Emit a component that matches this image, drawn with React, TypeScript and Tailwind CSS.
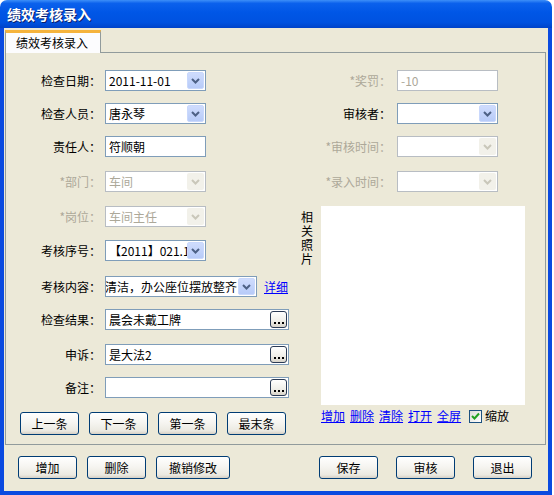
import type React from 'react'

const Chevron = ({ disabled }: { disabled?: boolean }) => (
  <svg width="9" height="6" viewBox="0 0 9 6">
    <polyline points="1,1 4.5,4.5 8,1" fill="none" stroke={disabled ? '#c9c7ba' : '#4d6185'} strokeWidth="2" />
  </svg>
)

const Combo = ({ value, disabled, className = 'w-[101px]', alignEnd }: { value: string; disabled?: boolean; className?: string; alignEnd?: boolean }) => (
  <div
    className={`flex h-[21px] items-center overflow-hidden border bg-white ${className} ${disabled ? 'border-[#b8bdc3]' : 'border-[#7f9db9]'}`}
  >
    <div className={`flex flex-1 overflow-hidden whitespace-nowrap ${alignEnd ? 'justify-end pr-[1px]' : 'pl-[3px]'}`}>
      <span className={`block shrink-0 leading-[19px] ${disabled ? 'text-[#aca899]' : 'text-black'}`}>{value}</span>
    </div>
    <div
      className={`mr-[1px] flex h-[17px] w-[17px] shrink-0 items-center justify-center rounded-[2px] ${
        disabled ? 'bg-[#f2f1ea]' : 'border border-[#c9d8fc] bg-[linear-gradient(180deg,#cfdcfd_0%,#b7cbf8_100%)]'
      }`}
    >
      <Chevron disabled={disabled} />
    </div>
  </div>
)

const TextBox = ({ value, disabled, className = 'w-[101px]' }: { value: string; disabled?: boolean; className?: string }) => (
  <div className={`flex h-[21px] items-center border bg-white pl-[3px] ${className} ${disabled ? 'border-[#b8bdc3] text-[#aca899]' : 'border-[#7f9db9] text-black'}`}>
    {value}
  </div>
)

const EllipsisBox = ({ value, className = 'w-[184px]' }: { value: string; className?: string }) => (
  <div className={`flex h-[21px] items-center border border-[#7f9db9] bg-white ${className}`}>
    <div className="flex-1 overflow-hidden whitespace-nowrap pl-[3px] leading-[19px]">{value}</div>
    <div className="mr-[1px] flex h-[17px] w-[17px] shrink-0 items-end justify-center gap-[2px] rounded-[3px] border border-[#2b3b55] bg-[linear-gradient(180deg,#ffffff_0%,#f0efe9_60%,#d8d4ca_100%)] pb-[3px]">
      <span className="h-[2px] w-[2px] bg-black" />
      <span className="h-[2px] w-[2px] bg-black" />
      <span className="h-[2px] w-[2px] bg-black" />
    </div>
  </div>
)

const Row = ({
  label,
  dim,
  right,
  className,
  children,
}: {
  label: string
  dim?: boolean
  right?: boolean
  className: string
  children: React.ReactNode
}) => (
  <div className={`flex h-[21px] items-center ${className}`}>
    <div className={`text-right leading-[21px] ${right ? 'w-[101px]' : 'w-[95px]'} ${dim ? 'text-[#aca899]' : 'text-black'}`}>{label}</div>
    <div className={right ? 'ml-[6px]' : 'ml-[4px]'}>{children}</div>
  </div>
)

const XpButton = ({ label, className = 'w-[59px]' }: { label: string; className?: string }) => (
  <button
    className={`flex h-[23px] items-center justify-center rounded-[3px] border border-[#003c74] bg-[linear-gradient(180deg,#ffffff_0%,#f6f5f1_45%,#ebe9e1_85%,#d6d0c5_100%)] text-[12px] text-black ${className}`}
  >
    {label}
  </button>
)

const links = ['增加', '删除', '清除', '打开', '全屏']

export default function App() {
  return (
    <div className="h-[495px] w-[554px] bg-white font-['Noto_Sans_CJK_SC',sans-serif] text-[12px]">
      <div className="flex h-[495px] w-[552px] flex-col overflow-hidden rounded-t-[7px]">
        {/* title bar */}
        <div className="flex h-[28px] shrink-0 items-center bg-[linear-gradient(180deg,#3d8ff8_0%,#0b61ec_12%,#0056e6_45%,#0052e0_80%,#0043c9_100%)] pl-[7px]">
          <span className="text-[14px] font-bold text-white [text-shadow:1px_1px_0_#0a1e6a]">绩效考核录入</span>
        </div>

        <div className="flex flex-1 flex-col border-x-[4px] border-b-[4px] border-[#0a4ae0] bg-[#ece9d8]">
          {/* tab header */}
          <div className="mt-[2px] flex pl-[1px]">
            <div className="relative z-10 -mb-px flex h-[23px] w-[96px] items-start border-x border-[#919b9c] border-t-[3px] border-t-[#f5b33c] bg-[#fcfcfe] pl-[10px] pt-[1px] leading-[18px]">
              绩效考核录入
            </div>
          </div>

          {/* tab panel */}
          <div className="ml-[1px] flex h-[393px] w-[541px] border border-[#919b9c]">
            {/* left column */}
            <div className="flex w-[284px] flex-col">
              <Row label="检查日期：" className="mt-[17px]">
                <Combo value="2011-11-01" />
              </Row>
              <Row label="检查人员：" className="mt-[12px]">
                <Combo value="唐永琴" />
              </Row>
              <Row label="责任人：" className="mt-[12px]">
                <TextBox value="符顺朝" />
              </Row>
              <Row label="*部门：" dim className="mt-[14px]">
                <Combo value="车间" disabled />
              </Row>
              <Row label="*岗位：" dim className="mt-[14px]">
                <Combo value="车间主任" disabled />
              </Row>
              <Row label="考核序号：" className="mt-[13px]">
                <Combo value="【2011】021.1" />
              </Row>
              <Row label="考核内容：" className="mt-[15px]">
                <div className="flex items-center">
                  <Combo value="清洁，办公座位摆放整齐" className="w-[152px]" alignEnd />
                  <span className="ml-[7px] cursor-pointer text-[#0000ff] underline">详细</span>
                </div>
              </Row>
              <Row label="检查结果：" className="mt-[12px]">
                <EllipsisBox value="晨会未戴工牌" />
              </Row>
              <Row label="申诉：" className="mt-[14px]">
                <EllipsisBox value="是大法2" />
              </Row>
              <Row label="备注：" className="mt-[12px]">
                <EllipsisBox value="" />
              </Row>
              <div className="mt-[14px] flex gap-[10px] pl-[14px]">
                <XpButton label="上一条" />
                <XpButton label="下一条" />
                <XpButton label="第一条" />
                <XpButton label="最末条" />
              </div>
            </div>

            {/* right column */}
            <div className="flex flex-1 flex-col">
              <Row label="*奖罚：" dim right className="mt-[17px]">
                <TextBox value="-10" disabled />
              </Row>
              <Row label="审核者：" right className="mt-[12px]">
                <Combo value="" />
              </Row>
              <Row label="*审核时间：" dim right className="mt-[12px]">
                <Combo value="" disabled />
              </Row>
              <Row label="*录入时间：" dim right className="mt-[14px]">
                <Combo value="" disabled />
              </Row>

              <div className="mt-[14px] flex">
                <div className="w-[31px] pl-[11px] pt-[4px]">
                  <div className="w-[12px] break-all leading-[14px]">相关照片</div>
                </div>
                <div className="flex flex-col">
                  <div className="h-[199px] w-[204px] bg-white" />
                  <div className="mt-[3px] flex h-[16px] items-center">
                    {links.map((l) => (
                      <span key={l} className="mr-[5px] cursor-pointer text-[#0000ff] underline">
                        {l}
                      </span>
                    ))}
                    <span className="ml-[3px] flex h-[13px] w-[13px] items-center justify-center border border-[#1c5180] bg-[linear-gradient(135deg,#dcdcd7_0%,#ffffff_100%)]">
                      <svg width="9" height="8" viewBox="0 0 9 8">
                        <polyline points="1,4 3.5,6.5 8,1.5" fill="none" stroke="#21a121" strokeWidth="2" />
                      </svg>
                    </span>
                    <span className="ml-[3px]">缩放</span>
                  </div>
                </div>
              </div>
            </div>
          </div>

          {/* bottom buttons */}
          <div className="mt-[11px] flex items-center pl-[14px] pr-[16px]">
            <div className="flex gap-[10px]">
              <XpButton label="增加" />
              <XpButton label="删除" />
              <XpButton label="撤销修改" className="w-[74px]" />
            </div>
            <div className="ml-auto flex gap-[18px]">
              <XpButton label="保存" />
              <XpButton label="审核" />
              <XpButton label="退出" />
            </div>
          </div>
        </div>
      </div>
    </div>
  )
}
